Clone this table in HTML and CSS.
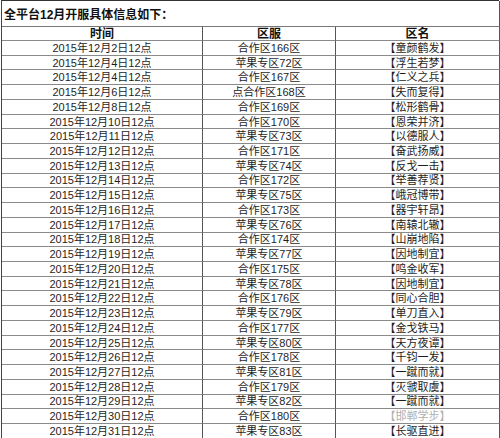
FILE: index.html
```html
<!DOCTYPE html>
<html lang="zh">
<head>
<meta charset="utf-8">
<link rel="stylesheet" href="styles.css">
</head>
<body>
<div class="sheet">
  <div class="cell title">全平台12月开服具体信息如下：</div>
  <div class="cell head">时间</div><div class="cell head">区服</div><div class="cell head">区名</div>
  <div class="cell">2015年12月2日12点</div><div class="cell">合作区166区</div><div class="cell">【童颜鹤发】</div>
  <div class="cell">2015年12月4日12点</div><div class="cell">苹果专区72区</div><div class="cell">【浮生若梦】</div>
  <div class="cell">2015年12月4日12点</div><div class="cell">合作区167区</div><div class="cell">【仁义之兵】</div>
  <div class="cell">2015年12月6日12点</div><div class="cell">点合作区168区</div><div class="cell">【失而复得】</div>
  <div class="cell">2015年12月8日12点</div><div class="cell">合作区169区</div><div class="cell">【松形鹤骨】</div>
  <div class="cell">2015年12月10日12点</div><div class="cell">合作区170区</div><div class="cell">【恩荣并济】</div>
  <div class="cell">2015年12月11日12点</div><div class="cell">苹果专区73区</div><div class="cell">【以德服人】</div>
  <div class="cell">2015年12月12日12点</div><div class="cell">合作区171区</div><div class="cell">【奋武扬威】</div>
  <div class="cell">2015年12月13日12点</div><div class="cell">苹果专区74区</div><div class="cell">【反戈一击】</div>
  <div class="cell">2015年12月14日12点</div><div class="cell">合作区172区</div><div class="cell">【举善荐贤】</div>
  <div class="cell">2015年12月15日12点</div><div class="cell">苹果专区75区</div><div class="cell">【峨冠博带】</div>
  <div class="cell">2015年12月16日12点</div><div class="cell">合作区173区</div><div class="cell">【器宇轩昂】</div>
  <div class="cell">2015年12月17日12点</div><div class="cell">苹果专区76区</div><div class="cell">【南辕北辙】</div>
  <div class="cell">2015年12月18日12点</div><div class="cell">合作区174区</div><div class="cell">【山崩地陷】</div>
  <div class="cell">2015年12月19日12点</div><div class="cell">苹果专区77区</div><div class="cell">【因地制宜】</div>
  <div class="cell">2015年12月20日12点</div><div class="cell">合作区175区</div><div class="cell">【鸣金收军】</div>
  <div class="cell">2015年12月21日12点</div><div class="cell">苹果专区78区</div><div class="cell">【因地制宜】</div>
  <div class="cell">2015年12月22日12点</div><div class="cell">合作区176区</div><div class="cell">【同心合胆】</div>
  <div class="cell">2015年12月23日12点</div><div class="cell">苹果专区79区</div><div class="cell">【单刀直入】</div>
  <div class="cell">2015年12月24日12点</div><div class="cell">合作区177区</div><div class="cell">【金戈铁马】</div>
  <div class="cell">2015年12月25日12点</div><div class="cell">苹果专区80区</div><div class="cell">【天方夜谭】</div>
  <div class="cell">2015年12月26日12点</div><div class="cell">合作区178区</div><div class="cell">【千钧一发】</div>
  <div class="cell">2015年12月27日12点</div><div class="cell">苹果专区81区</div><div class="cell">【一蹴而就】</div>
  <div class="cell">2015年12月28日12点</div><div class="cell">合作区179区</div><div class="cell">【灭虢取虞】</div>
  <div class="cell">2015年12月29日12点</div><div class="cell">苹果专区82区</div><div class="cell">【一蹴而就】</div>
  <div class="cell">2015年12月30日12点</div><div class="cell">合作区180区</div><div class="cell faded">【邯郸学步】</div>
  <div class="cell">2015年12月31日12点</div><div class="cell">苹果专区83区</div><div class="cell">【长驱直进】</div>
</div>
</body>
</html>
```

FILE: styles.css
```css
html, body {
  margin: 0;
  padding: 0;
  background: #fff;
}

.sheet {
  margin-left: 1px;
  width: 498px;
  display: grid;
  grid-template-columns: 201px 133px 164px;
  grid-template-rows: 26px 14px repeat(27, 14.74px);
  border-top: 1px solid #333;
  border-left: 1px solid #444;
  box-sizing: border-box;
  font-family: "Liberation Sans", "Noto Sans CJK SC", sans-serif;
  font-size: 11px;
  color: #1e1e1e;
}

.cell {
  display: flex;
  align-items: center;
  justify-content: center;
  border-right: 1px solid #555;
  border-bottom: 1px solid #8a8a8a;
  line-height: 1;
  white-space: nowrap;
  padding-top: 1px;
}

.title {
  grid-column: 1 / 4;
  justify-content: flex-start;
  padding-left: 2px;
  padding-top: 3px;
  font-weight: bold;
  font-size: 12px;
  color: #111;
  border-bottom-color: #777;
}

.head {
  font-weight: bold;
  font-size: 12px;
  color: #111;
}

.faded {
  color: #b0b0b0;
}
```
